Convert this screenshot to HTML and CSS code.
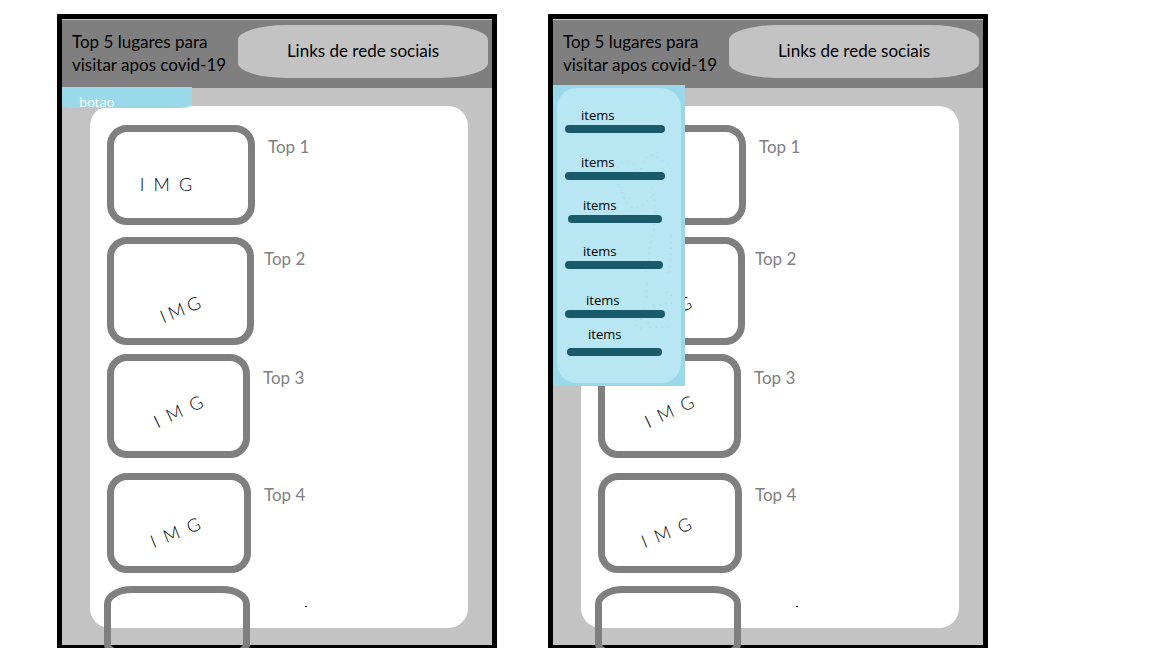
FILE: index.html
```html
<!DOCTYPE html>
<html lang="pt">
<head>
<meta charset="utf-8">
<meta name="viewport" content="width=device-width, initial-scale=1">
<title>Top 5 lugares para visitar apos covid-19</title>
<link rel="stylesheet" href="styles.css">
</head>
<body>
<main class="board">
  <section class="screen">
    <header class="header">
      <h1 class="title">Top 5 lugares para<br>visitar apos covid-19</h1>
      <a class="social" href="#">Links de rede sociais</a>
    </header>
    <button class="menu-button" type="button">botao</button>
    <div class="panel">
      <article class="place first"><div class="card"><span class="note"><i>I</i><i>M</i><i>G</i></span></div><h2 class="name">Top 1</h2></article>
      <article class="place second"><div class="card"><span class="note"><i>I</i><i>M</i><i>G</i></span></div><h2 class="name">Top 2</h2></article>
      <article class="place third"><div class="card"><span class="note"><i>I</i><i>M</i><i>G</i></span></div><h2 class="name">Top 3</h2></article>
      <article class="place fourth"><div class="card"><span class="note"><i>I</i><i>M</i><i>G</i></span></div><h2 class="name">Top 4</h2></article>
      <article class="place fifth"><div class="card"></div><span class="speck"></span></article>
    </div>
  </section>

  <section class="screen">
    <header class="header">
      <h1 class="title">Top 5 lugares para<br>visitar apos covid-19</h1>
      <a class="social" href="#">Links de rede sociais</a>
    </header>
    <nav class="menu">
      <svg class="dots" viewBox="0 0 64 180" aria-hidden="true">
        <path d="M3 14Q12 2 20 12Q25 22 27 11Q34-5 44 5Q52 8 57 16M2 24Q4 42 19 46M5 32Q10 54 22 54Q32 50 37 42M37 34Q44 58 36 88Q34 106 30 120M56 82Q57 98 53 124M33 130Q30 142 33 146M51 138L57 142M57 149L38 151M29 154Q22 162 28 170M57 155Q46 146 34 158Q32 168 34 173Q44 174 58 173M20 171L29 176"/>
      </svg>
      <ul class="menu-list">
        <li class="item"><a href="#">items</a></li>
        <li class="item two"><a href="#">items</a></li>
        <li class="item three"><a href="#">items</a></li>
        <li class="item four"><a href="#">items</a></li>
        <li class="item five"><a href="#">items</a></li>
        <li class="item six"><a href="#">items</a></li>
      </ul>
    </nav>
    <div class="panel">
      <article class="place first"><div class="card"><span class="note"><i>I</i><i>M</i><i>G</i></span></div><h2 class="name">Top 1</h2></article>
      <article class="place second"><div class="card"><span class="note"><i>I</i><i>M</i><i>G</i></span></div><h2 class="name">Top 2</h2></article>
      <article class="place third"><div class="card"><span class="note"><i>I</i><i>M</i><i>G</i></span></div><h2 class="name">Top 3</h2></article>
      <article class="place fourth"><div class="card"><span class="note"><i>I</i><i>M</i><i>G</i></span></div><h2 class="name">Top 4</h2></article>
      <article class="place fifth"><div class="card"></div><span class="speck"></span></article>
    </div>
  </section>
</main>
</body>
</html>
```
FILE: styles.css
```css
* { box-sizing: border-box; }

body {
  margin: 0;
  background: #fff;
  color: #000;
  font-family: Lato, "Liberation Sans", sans-serif;
}

.board {
  display: grid;
  grid-template-columns: 1fr 1fr;
  column-gap: 51px;
  padding: 14px 164px 0 57px;
  overflow: hidden;
}

.screen {
  position: relative;
  background: #c3c3c3;
  border: 5px solid #000;
  border-bottom-width: 3px;
}

.header {
  display: flex;
  align-items: flex-start;
  justify-content: space-between;
  min-height: 69px;
  padding: 5px 4px 10px 10px;
  background: #7f7f7f;
  border-top: 1px solid #c3c3c3;
}

.title {
  margin: 5px 0 0;
  font-size: 17px;
  font-weight: 400;
  line-height: 23px;
  white-space: nowrap;
}

.social {
  flex: 0 1 250px;
  padding: 14px 0 15px;
  border-radius: 48px / 15px;
  background: #c3c3c3;
  color: #000;
  font-size: 17px;
  line-height: 24px;
  text-align: center;
  text-decoration: none;
  white-space: nowrap;
}

.menu-button {
  position: absolute;
  top: 68px;
  left: 0;
  width: 130px;
  height: 21px;
  padding: 7px 0 0 17px;
  border: 0;
  border-radius: 0 0 12px 12px / 0 0 4px 4px;
  background: #99d9ea;
  color: #fff;
  font: 13px/16px "Open Sans", "Noto Sans", sans-serif;
  text-align: left;
}

.panel {
  display: flow-root;
  margin: 18px 24px 17px 28px;
  padding: 19px 17px 0;
  border-radius: 20px;
  background: #fff;
}

.place {
  display: flex;
  align-items: flex-start;
  gap: 13px;
}

.card {
  display: grid;
  place-items: center;
  width: 143px;
  height: 100px;
  border: 7px solid #7f7f7f;
  border-radius: 20px;
}

.name {
  margin: 10px 0 0;
  color: #7f7f7f;
  font-size: 17px;
  font-weight: 400;
  line-height: 24px;
}

.note {
  display: flex;
  gap: 9px;
  font-size: 18px;
  font-weight: 300;
  line-height: 20px;
}

.note i { font-style: normal; }

.first .card { width: 148px; padding: 18px 30px 0 0; }

.second { margin-top: 12px; gap: 10px; }
.second .card { width: 147px; height: 108px; padding-top: 36px; }
.second .note { gap: 4px; transform: rotate(-22deg); }

.third { margin-top: 9px; }
.third .card { height: 104px; padding-top: 10px; }
.third .name { margin-top: 12px; }
.third .note { transform: rotate(-25deg); }

.fourth { margin-top: 15px; }
.fourth .card { width: 144px; padding: 18px 8px 0 0; }
.fourth .note { transform: rotate(-22deg); }

.fifth {
  gap: 55px;
  margin: 13px 0 -28px -3px;
}
.fifth .card {
  width: 146px;
  height: 70px;
  border-radius: 28px 28px 16px 16px / 18px 18px 12px 12px;
}

.speck {
  width: 2px;
  height: 1px;
  margin-top: 20px;
  background: #000;
}

.menu {
  position: absolute;
  z-index: 1;
  top: 66px;
  left: 0;
  width: 132px;
  padding: 3px 4px;
  background: #99d9ea;
}

.menu-list {
  margin: 0;
  padding: 18px 16px 27px 8px;
  border-radius: 20px;
  background: #b8e6f2;
  list-style: none;
}

.item { position: relative; }

.item a {
  display: block;
  padding-left: 16px;
  color: #000;
  font: 13px/19px "Open Sans", "Noto Sans", sans-serif;
  text-decoration: none;
}

.item::after {
  content: "";
  display: block;
  height: 8px;
  border-radius: 4px;
  background: #195b6b;
}

.two { margin-top: 20px; }
.three { margin: 16px 3px 0; }
.three a { padding-left: 15px; }
.four { margin: 19px 2px 0 0; }
.four a { padding-left: 18px; }
.five { margin-top: 22px; }
.five a { padding-left: 21px; }
.six { margin: 7px 3px 0 2px; }
.six a { padding: 0 0 4px 21px; }

.dots {
  position: absolute;
  top: 69px;
  right: 6px;
  width: 64px;
  height: 180px;
  fill: none;
  stroke: #99d9ea;
  stroke-dasharray: 1 5;
  pointer-events: none;
}
```
